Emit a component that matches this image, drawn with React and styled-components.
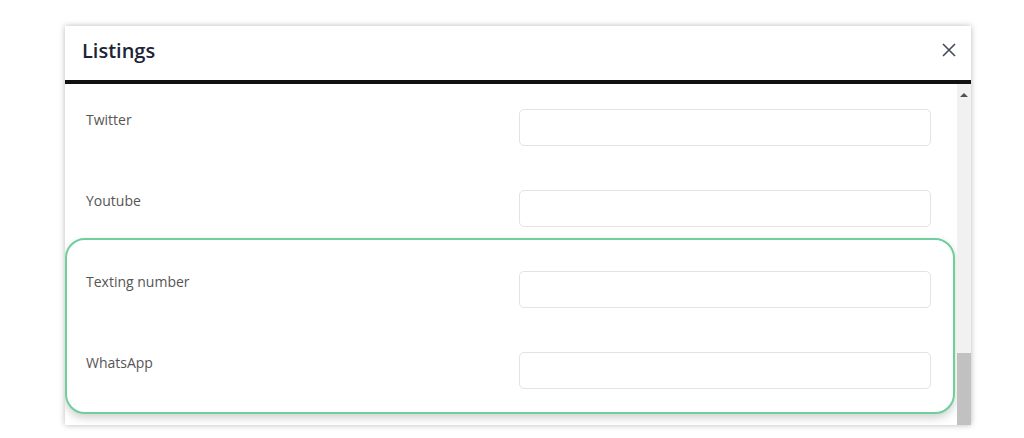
import React from "react";
import styled, { createGlobalStyle } from "styled-components";

const GlobalStyle = createGlobalStyle`
  html, body {
    margin: 0;
    padding: 0;
    background: #ffffff;
    font-family: "Open Sans", "Noto Sans", sans-serif;
  }
`;

const Page = styled.div`
  width: 1024px;
  height: 438px;
  padding: 26px 0 0 65px;
  box-sizing: border-box;
  overflow: hidden;
`;

const Modal = styled.div`
  width: 906px;
  height: 399px;
  background: #fff;
  box-shadow: 0 0 6px rgba(0, 0, 0, 0.28);
  display: flex;
  flex-direction: column;
  overflow: hidden;
`;

const Header = styled.div`
  height: 58px;
  box-sizing: border-box;
  border-bottom: 4px solid #111;
  display: flex;
  align-items: center;
  justify-content: space-between;
  padding: 0 14px 6px 17px;
  flex-shrink: 0;
`;

const Title = styled.h2`
  margin: 0;
  font-size: 20px;
  font-weight: 600;
  color: #1c2438;
`;

const CloseButton = styled.button`
  border: none;
  background: none;
  padding: 0;
  width: 16px;
  height: 16px;
  display: flex;
  align-items: center;
  justify-content: center;
  cursor: pointer;
`;

const Body = styled.div`
  flex: 1;
  display: flex;
  min-height: 0;
`;

const Content = styled.div`
  flex: 1;
  overflow: hidden;
  padding: 25px 26px 0 21px;
`;

const Row = styled.div`
  display: flex;
  align-items: flex-start;
  height: 37px;
  margin-bottom: 44px;

  &:last-child {
    margin-bottom: 0;
  }
`;

const Label = styled.label`
  flex: 1;
  font-size: 14px;
  color: #555;
  line-height: 20px;
  padding-top: 1px;
`;

const Input = styled.input`
  width: 412px;
  height: 37px;
  box-sizing: border-box;
  border: 1.5px solid #e3e3e3;
  border-radius: 5px;
  background: #fff;
  outline: none;
`;

const Highlight = styled.div`
  margin: -33px -24px 0 -21px;
  padding: 31px 22px 23px 19px;
  border: 2px solid #6fcf9c;
  border-radius: 20px;
  box-shadow: 0 4px 8px rgba(0, 0, 0, 0.18);
  position: relative;
  background: #fff;
`;

const Scrollbar = styled.div`
  width: 14px;
  background: #f1f1f1;
  display: flex;
  flex-direction: column;
  align-items: center;
`;

const ArrowUp = styled.div`
  width: 0;
  height: 0;
  margin-top: 9px;
  border-left: 4px solid transparent;
  border-right: 4px solid transparent;
  border-bottom: 4px solid #505050;
`;

const Spacer = styled.div`
  flex: 1;
`;

const Thumb = styled.div`
  width: 100%;
  height: 72px;
  background: #c1c1c1;
`;

const fields = ["Twitter", "Youtube"];
const highlighted = ["Texting number", "WhatsApp"];

export default function App() {
  return (
    <>
      <GlobalStyle />
      <Page>
        <Modal>
          <Header>
            <Title>Listings</Title>
            <CloseButton aria-label="close">
              <svg width="14" height="14" viewBox="0 0 14 14">
                <path d="M1 1 L13 13 M13 1 L1 13" stroke="#444b58" strokeWidth="1.6" fill="none" />
              </svg>
            </CloseButton>
          </Header>
          <Body>
            <Content>
              {fields.map((f) => (
                <Row key={f}>
                  <Label>{f}</Label>
                  <Input type="text" />
                </Row>
              ))}
              <Highlight>
                {highlighted.map((f) => (
                  <Row key={f}>
                    <Label>{f}</Label>
                    <Input type="text" />
                  </Row>
                ))}
              </Highlight>
            </Content>
            <Scrollbar>
              <ArrowUp />
              <Spacer />
              <Thumb />
            </Scrollbar>
          </Body>
        </Modal>
      </Page>
    </>
  );
}
